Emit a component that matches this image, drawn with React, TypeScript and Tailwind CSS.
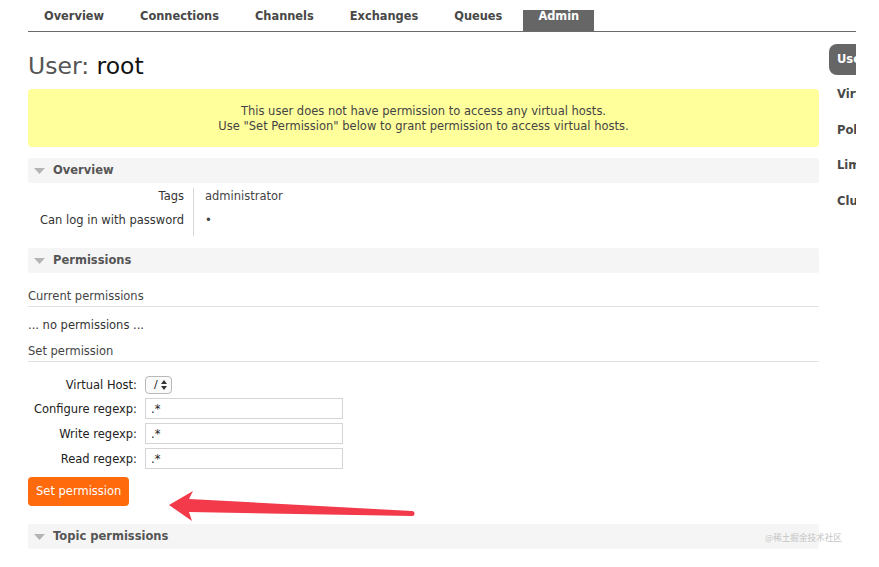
const tabs = ["Overview", "Connections", "Channels", "Exchanges", "Queues", "Admin"];
const sideItems = ["Users", "Virtual Hosts", "Policies", "Limits", "Cluster"];

const SectionHeader = ({ title, className = "" }: { title: string; className?: string }) => (
  <div className={`flex h-[25px] items-center rounded-[3px] bg-[#f5f5f5] pl-[6px] pt-[1px] ${className}`}>
    <svg width="11" height="6" viewBox="0 0 11 6" className="mr-[8px]">
      <polygon points="0,0 11,0 5.5,6" fill="#b4b4b4" />
    </svg>
    <span className="font-bold text-[#555]">{title}</span>
  </div>
);

const TextInput = () => (
  <div className="flex h-[21px] w-[198px] items-center border border-[#d4d4d4] bg-white pl-[5px] pt-[1px] text-[#222]">
    .*
  </div>
);

export default function App() {
  return (
    <div className="relative min-h-[567px] bg-white font-['DejaVu_Sans',Verdana,sans-serif] text-[11.5px] text-[#333]">
      <div className="w-[856px] overflow-hidden pl-[28px]">
        {/* top tabs */}
        <nav className="flex gap-[6px] border-b border-[#6a6a6a] pl-[1px] pt-[10px] text-[11.4px]">
          {tabs.map((t) => (
            <div
              key={t}
              className={
                t === "Admin"
                  ? "h-[21px] bg-[#666] px-[15px] font-bold leading-[13px] text-white"
                  : "h-[21px] px-[15px] font-bold leading-[13px] text-[#484848]"
              }
            >
              {t}
            </div>
          ))}
        </nav>

        <div className="flex gap-[10px]">
          <main className="w-[791px] shrink-0">
            <h1 className="mt-[20px] text-[23.5px] leading-[28px] text-[#555]">
              User: <span className="text-[#111]">root</span>
            </h1>

            <div className="mt-[9px] rounded-[4px] bg-[#ffff9c] pb-[13px] pt-[15px] text-center leading-[15px] text-[#444]">
              <p>This user does not have permission to access any virtual hosts.</p>
              <p>Use "Set Permission" below to grant permission to access virtual hosts.</p>
            </div>

            <SectionHeader title="Overview" className="mt-[11px]" />
            <div className="mt-[5px] grid grid-cols-[165px_1fr] leading-[14px]">
              <div className="pb-[5px] pr-[9px] pt-[1px] text-right text-[#333]">Tags</div>
              <div className="border-l border-[#d8d8d8] pb-[5px] pl-[11px] pt-[1px] text-[#444]">administrator</div>
              <div className="pb-[9px] pr-[9px] pt-[5px] text-right text-[#333]">Can log in with password</div>
              <div className="border-l border-[#d8d8d8] pb-[9px] pl-[11px] pt-[5px] text-[#444]">•</div>
            </div>

            <SectionHeader title="Permissions" className="mt-[12px] h-[24px]" />
            <div className="mt-[16px] border-b border-[#e2e2e2] pb-[3px] leading-[14px] text-[#444]">
              Current permissions
            </div>
            <div className="mt-[11px] leading-[14px] text-[#333]">... no permissions ...</div>
            <div className="mt-[12px] border-b border-[#e2e2e2] pb-[3px] leading-[14px] text-[#444]">
              Set permission
            </div>

            <div className="mt-[14px] grid grid-cols-[109px_auto] items-center justify-start gap-x-[8px] gap-y-[4px] leading-[14px] text-[#222]">
              <div className="text-right">Virtual Host:</div>
              <div className="flex h-[18px] w-[27px] items-center justify-between rounded-[4px] border border-[#b8b8b8] bg-[#fafafa] pl-[8px] pr-[4px]">
                <span className="text-[11px]">/</span>
                <svg width="6" height="10" viewBox="0 0 6 10">
                  <polygon points="3,0 6,4 0,4" fill="#333" />
                  <polygon points="0,6 6,6 3,10" fill="#333" />
                </svg>
              </div>
              <div className="text-right">Configure regexp:</div>
              <TextInput />
              <div className="text-right">Write regexp:</div>
              <TextInput />
              <div className="text-right">Read regexp:</div>
              <TextInput />
            </div>

            <button className="mt-[8px] h-[29px] rounded-[4px] bg-[#ff6a0d] px-[8px] pt-[1px] text-white">
              Set permission
            </button>

            <SectionHeader title="Topic permissions" className="mt-[18px] h-[24px]" />
          </main>

          {/* right side menu, clipped */}
          <aside className="mt-[12px] flex w-[120px] shrink-0 flex-col gap-[4.5px]">
            {sideItems.map((s, i) => (
              <div
                key={s}
                className={
                  i === 0
                    ? "flex h-[31px] items-center whitespace-nowrap rounded-[8px] bg-[#666] px-[8px] font-bold text-white"
                    : "flex h-[31px] items-center whitespace-nowrap px-[8px] font-bold text-[#484848]"
                }
              >
                {s}
              </div>
            ))}
          </aside>
        </div>
      </div>

      {/* annotation arrow */}
      <svg className="pointer-events-none absolute left-0 top-0" width="879" height="567">
        <polygon
          points="169,505 193,491 189,499 412,511 412,516 189,512 192,521"
          fill="#f23a4b"
        />
        <circle cx="412" cy="513.5" r="2.5" fill="#f23a4b" />
      </svg>

      <div className="absolute left-[765px] top-[531px] font-['Noto_Sans_CJK_SC',sans-serif] text-[8.6px] leading-[12px] text-[#c4c4c4]">
        @稀土掘金技术社区
      </div>
    </div>
  );
}
